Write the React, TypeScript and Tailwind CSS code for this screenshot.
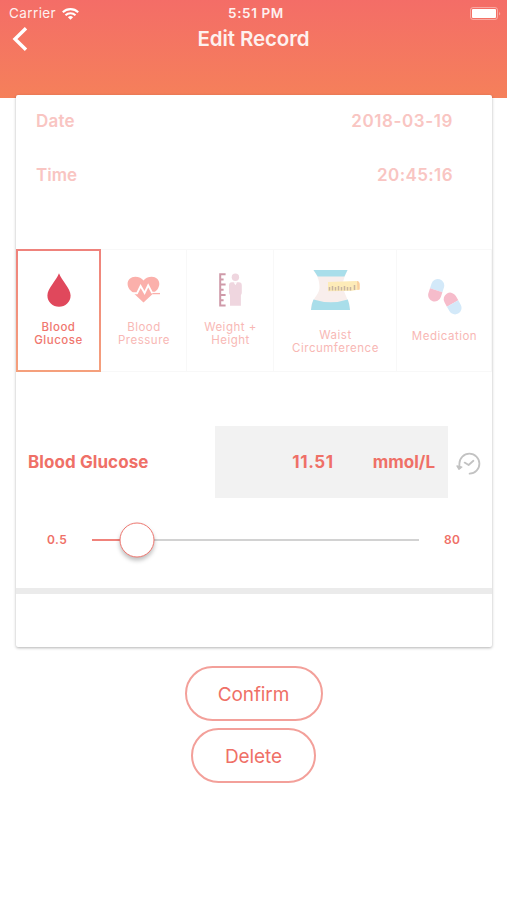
import { useState } from 'react';
import clsx from 'clsx';

const DropIcon = () => (
  <svg width="24" height="34" viewBox="0 0 24 34">
    <path d="M12 0.3C14.6 7.4 23.6 15.5 23.6 22.6A11.6 11.2 0 0 1 0.4 22.6C0.4 15.5 9.4 7.4 12 0.3Z" fill="#e0485c" />
  </svg>
);

const HeartIcon = () => (
  <svg width="34" height="27" viewBox="0 0 34 27" fill="none">
    <path
      d="M16.5 26.4L2.8 13.8C-2.2 7 2 0.8 8.2 0.8C12 0.8 14.8 2.4 16.5 4.6C18.2 2.4 21 0.8 24.8 0.8C31 0.8 35 7 30.2 13.8Z"
      fill="#fbb0ab"
    />
    <path d="M0 17.3H10L13.6 10L17.6 17L21.2 9.4L25 16.6H34" stroke="#fff" strokeWidth="1.9" />
    <path d="M25.5 17.6H33" stroke="#fbb0ab" strokeWidth="1.3" />
  </svg>
);

const WeightIcon = () => (
  <svg width="26" height="34" viewBox="0 0 26 34" fill="none">
    <path
      d="M7.6 1.2H2.2V32.4H7.6M2.2 6.4H5.6M2.2 11.6H7.6M2.2 16.8H5.6M2.2 22H7.6M2.2 27.2H5.6"
      stroke="#cf9aa9"
      strokeWidth="2"
    />
    <circle cx="17.4" cy="4.2" r="3.7" fill="#efd6df" />
    <path d="M13.9 9.2H20.9Q23.8 9.2 23.8 12.5V19.5Q23.8 21.2 22.9 22V32.8H12V22Q11 21.2 11 19.5V12.5Q11 9.2 13.9 9.2Z" fill="#efd6df" />
    <path d="M15.7 9.2H19.1L17.4 12.2Z" fill="#fff" />
  </svg>
);

const WaistIcon = () => (
  <svg width="50" height="42" viewBox="0 0 50 42" fill="none">
    <path d="M2.5 1H36.5C34.5 6 32 10 32 15C32 25 38 29 39 41H0C0.5 28 8.5 27 8.5 18C8.5 11 6 6 2.5 1Z" fill="#f8eeec" />
    <path d="M2.5 1H36.5L33.4 7.6H6.8Z" fill="#a9deea" />
    <path d="M2.5 30.5Q20 36 36.8 30.5Q38.6 35 39 41H0Q0.4 35 2.5 30.5Z" fill="#a9deea" />
    <path d="M17 13L45 12Q48.6 12 48.6 15.5V20.5L41 21.7L17 22.3Z" fill="#fdebb8" />
    <path d="M46 12.1Q48.6 12.5 48.6 15.5V20.5L46.4 20.9Z" fill="#f9cf9f" />
    <path
      d="M18.5 21.5V18M21.5 21.5V17M24.5 21.5V18M27.5 21.5V17M30.5 21.5V18M33.5 21.5V17M36.5 21.5V18M39.5 21.5V18M43.5 21V16"
      stroke="#c7b4a0"
      strokeWidth="1.5"
    />
  </svg>
);

const PillsIcon = () => (
  <svg width="34" height="38" viewBox="0 0 34 38">
    <g transform="translate(8.2 12.2) rotate(18)">
      <path d="M-6.5 0V-5A6.5 6.5 0 0 1 6.5 -5V0Z" fill="#d3e9f9" />
      <path d="M-6.5 0V5A6.5 6.5 0 0 0 6.5 5V0Z" fill="#f6bccb" />
    </g>
    <g transform="translate(24.6 25.5) rotate(-29)">
      <path d="M-6.5 0V-5A6.5 6.5 0 0 1 6.5 -5V0Z" fill="#f6bccb" />
      <path d="M-6.5 0V5A6.5 6.5 0 0 0 6.5 5V0Z" fill="#d3e9f9" />
    </g>
  </svg>
);

const HistoryIcon = () => (
  <svg width="25" height="24" viewBox="0 0 25 24" fill="none" stroke="#c2c2c2" strokeWidth="1.8" strokeLinecap="round" strokeLinejoin="round">
    <path d="M3.4 14V11.6A10 10 0 1 1 13.6 21.7" />
    <path d="M8.6 10.6L12.6 13L17.4 8.8" />
    <path d="M0.9 13.9L5.9 15L3 17.4Z" fill="#c2c2c2" strokeWidth="1.2" />
  </svg>
);

const TABS = [
  { id: 'glucose', label: 'Blood\nGlucose', icon: <DropIcon />, width: 'w-[85px]', iconBox: 'mt-[22px] h-[34px]', text: 'mt-[14px]' },
  { id: 'pressure', label: 'Blood\nPressure', icon: <HeartIcon />, width: 'w-[86px]', iconBox: 'mt-[25px] h-[31px]', text: 'mt-[14px]' },
  { id: 'weight', label: 'Weight +\nHeight', icon: <WeightIcon />, width: 'w-[87px]', iconBox: 'mt-[22px] h-[34px]', text: 'mt-[14px]' },
  { id: 'waist', label: 'Waist\nCircumference', icon: <WaistIcon />, width: 'w-[123px]', iconBox: 'mt-[18px] h-[42px]', text: 'mt-[18px]' },
  { id: 'medication', label: 'Medication', icon: <PillsIcon />, width: 'w-[95px]', iconBox: 'mt-[27px] h-[38px]', text: 'mt-[14px]' },
];

function StatusBar() {
  return (
    <div className="grid h-[27px] grid-cols-3 items-center pr-[6px] pl-[9px] text-[13px] leading-none text-white">
      <div className="flex items-center gap-[6px]">
        <span className="text-[13.5px] tracking-[0.4px] opacity-90">Carrier</span>
        <svg width="17" height="12" viewBox="0 0 17 12" fill="none" stroke="#fff" strokeWidth="2.1">
          <path d="M0.8 4.3A11 11 0 0 1 16.2 4.3" />
          <path d="M3.5 7.2A7.2 7.2 0 0 1 13.5 7.2" />
          <path d="M8.5 11.8L5.9 9.2A3.7 3.7 0 0 1 11.1 9.2Z" fill="#fff" stroke="none" />
        </svg>
      </div>
      <span className="pt-px pl-[2px] text-center text-[13.5px] font-semibold tracking-[0.6px] opacity-90">5:51 PM</span>
      <svg className="justify-self-end" width="31" height="13" viewBox="0 0 31 13" fill="none">
        <rect x="0.5" y="0.5" width="27" height="12" rx="2.5" stroke="#fff" strokeOpacity="0.4" />
        <rect x="2" y="2" width="24" height="9" rx="1" fill="#fff" />
        <path d="M29.2 4.5Q31 6.5 29.2 8.5Z" fill="#fff" fillOpacity="0.5" />
      </svg>
    </div>
  );
}

export default function App() {
  const [activeTab, setActiveTab] = useState('glucose');
  const min = 0.5;
  const max = 80;
  const value = 11.51;
  const progress = ((value - min) / (max - min)) * 100;

  return (
    <div className="h-[900px] w-[507px] overflow-hidden bg-white font-['Inter',sans-serif] text-[#ef7067]">
      {/* Header */}
      <header className="h-[98px] bg-linear-to-b from-[#f46d67] to-[#f5805a]">
        <StatusBar />
        <div className="grid h-6 grid-cols-[48px_1fr_48px] items-center text-white">
          <button className="-mt-px pl-3" aria-label="Back">
            <svg width="16" height="24" viewBox="0 0 16 24" fill="none" stroke="#fff" strokeWidth="3.4">
              <path d="M14 1.2L3 12L14 22.8" />
            </svg>
          </button>
          <h1 className="text-center text-[20.5px] leading-6 font-semibold tracking-[-0.1px] opacity-90">Edit Record</h1>
        </div>
      </header>

      {/* Record card */}
      <main className="-mt-[3px] mr-[15px] ml-4 h-[552px] rounded-[2px] bg-white shadow-[0_1px_3px_rgba(0,0,0,0.3)]">
        <div className="flex h-[154px] flex-col pr-[39px] pl-5 text-[17px] leading-none font-semibold text-[#f9c5c2]">
          <div className="flex h-[53px] items-center justify-between">
            <span className="tracking-[0.2px]">Date</span>
            <span className="tracking-[0.6px]">2018-03-19</span>
          </div>
          <div className="flex h-[54px] items-center justify-between">
            <span>Time</span>
            <span className="tracking-[0.4px]">20:45:16</span>
          </div>
        </div>

        <div className="flex h-[123px]">
          {TABS.map((tab) => (
            <button
              key={tab.id}
              onClick={() => setActiveTab(tab.id)}
              className={clsx(
                'flex flex-col items-center',
                tab.width,
                activeTab === tab.id
                  ? 'bg-linear-to-b from-[#ef827c] to-[#f5a07c] p-[2px] font-medium text-[#f0776f]'
                  : 'border border-l-0 border-[#f8f8f8] py-px pl-px text-[#f8b8b5]',
              )}
            >
              <span className="flex w-full flex-1 flex-col items-center bg-white">
                <span className={clsx('flex shrink-0 justify-center', tab.iconBox)}>{tab.icon}</span>
                <span className={clsx('text-[11.5px] leading-[13px] tracking-[0.5px] whitespace-pre', tab.text)}>
                  {tab.label}
                </span>
              </span>
            </button>
          ))}
        </div>

        {/* Reading */}
        <div className="mt-[54px] flex h-[72px] items-center text-[17px] leading-none font-bold">
          <span className="w-[199px] pl-3 tracking-[0.08px]">Blood Glucose</span>
          <div className="flex h-full w-[233px] items-center justify-end bg-[#f2f2f2] pr-[13px]">
            <span className="mr-[39px] tracking-[0.6px]">11.51</span>
            <span>mmol/L</span>
          </div>
          <button className="ml-2 pt-1" aria-label="History">
            <HistoryIcon />
          </button>
        </div>

        <div className="mt-6 flex h-9 items-center text-[12px] font-semibold">
          <span className="w-[76px] pl-[31px] tracking-[0.5px]">{min}</span>
          <div className="relative h-[2px] w-[327px] bg-[#d2d2d2]">
            <div className="h-full bg-[#f0827b]" style={{ width: `${progress}%` }} />
            <div
              className="absolute top-1/2 size-[35px] -translate-x-1/2 -translate-y-1/2 rounded-full border-[1.5px] border-[#ee7770] bg-white shadow-[0_3px_4px_rgba(0,0,0,0.25)]"
              style={{ left: `${progress}%` }}
            />
          </div>
          <span className="pl-[25px] tracking-[0.3px]">{max}</span>
        </div>
        <div className="mt-[30px] h-[6px] bg-[#ebebeb]" />
      </main>

      {/* Actions */}
      <div className="mt-[19px] flex flex-col items-center gap-[7px] text-[19px] leading-none tracking-[-0.1px]">
        <button className="h-[55px] w-[138px] rounded-full border-2 border-[#f3a09a] pt-0.5">Confirm</button>
        <button className="h-[55px] w-[125px] rounded-full border-2 border-[#f3a09a] pt-0.5">Delete</button>
      </div>
    </div>
  );
}
